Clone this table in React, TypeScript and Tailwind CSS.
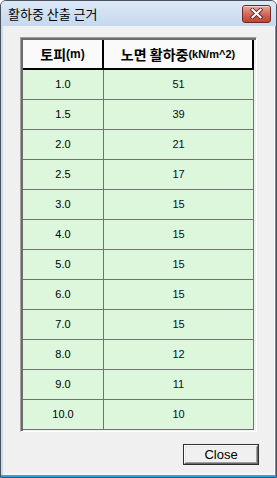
import React from "react";

const rows: [string, string][] = [
  ["1.0", "51"],
  ["1.5", "39"],
  ["2.0", "21"],
  ["2.5", "17"],
  ["3.0", "15"],
  ["4.0", "15"],
  ["5.0", "15"],
  ["6.0", "15"],
  ["7.0", "15"],
  ["8.0", "12"],
  ["9.0", "11"],
  ["10.0", "10"],
];

const ko = { fontFamily: '"Noto Sans CJK KR", "Noto Sans", sans-serif' };
const ar = { fontFamily: '"Liberation Sans", Arial, sans-serif' };

function TitleClose() {
  return (
    <div className="w-[29px] h-[18px] rounded-[3px] border border-[#6e2a22] bg-gradient-to-b from-[#eaa898] via-[#d4685a] to-[#c0432f] flex items-center justify-center shadow-[inset_0_1px_0_rgba(255,255,255,0.5)]">
      <svg width="13" height="11" viewBox="0 0 13 11">
        <path d="M2.5 1.8 L10.5 9.2 M10.5 1.8 L2.5 9.2" stroke="#4a1e1a" strokeWidth="3.8" strokeLinecap="square" />
        <path d="M2.5 1.8 L10.5 9.2 M10.5 1.8 L2.5 9.2" stroke="#ffffff" strokeWidth="2.2" strokeLinecap="square" />
      </svg>
    </div>
  );
}

export default function App() {
  return (
    <div className="w-[277px] h-[478px] bg-white">
      <div className="w-full h-full flex flex-col border border-[#47525e] rounded-t-[6px] overflow-hidden bg-[#c9dbef]">
        {/* Title bar */}
        <div className="h-[25px] shrink-0 flex items-center pl-[7px] pr-[5px] bg-gradient-to-b from-[#dde9f6] to-[#c5d8ed]">
          <span className="text-[13px] text-black leading-none" style={ko}>
            활하중 산출 근거
          </span>
          <div className="ml-auto">
            <TitleClose />
          </div>
        </div>
        {/* Body frame */}
        <div className="flex-1 flex flex-col pl-[2px] border-r border-b-2 border-[#2ba3dd] bg-[#c9dbef]">
          <div className="flex-1 flex flex-col bg-[#f0f0f0] border-r border-b border-[#f7f9fc] pt-[11px] px-[17px]">
            {/* Panel */}
            <div className="h-[395px] border-t border-l border-[#a0a0a0] border-r border-b border-r-white border-b-white">
              <div className="h-full border-t-2 border-l-2 border-[#6b6b6b] bg-[#f0f0f0]">
                <div className="grid grid-cols-[81px_150px]">
                  <div className="h-[30px] bg-[#fafafa] border-r-2 border-b-2 border-black flex items-center justify-center text-black font-bold">
                    <span className="text-[14px] leading-none" style={ko}>토피</span>
                    <span className="text-[12px] leading-none" style={ar}>(m)</span>
                  </div>
                  <div className="h-[30px] bg-[#fafafa] border-r-2 border-b-2 border-black flex items-center justify-center text-black font-bold">
                    <span className="text-[14px] leading-none" style={ko}>노면 활하중</span>
                    <span className="text-[11px] leading-none" style={ar}>(kN/m^2)</span>
                  </div>
                  {rows.map(([a, b]) => (
                    <React.Fragment key={a}>
                      <div className="h-[30px] bg-[#dcf7dc] border-r border-b border-[#727272] flex items-center justify-center text-[11px] text-black" style={ar}>
                        {a}
                      </div>
                      <div className="h-[30px] bg-[#dcf7dc] border-r border-b border-[#727272] flex items-center justify-center text-[11px] text-[#10082a]" style={ar}>
                        {b}
                      </div>
                    </React.Fragment>
                  ))}
                </div>
              </div>
            </div>
            {/* Button row */}
            <div className="flex justify-end pt-[12px] -mr-[2px]">
              <div className="w-[76px] h-[21px] border border-[#2e2e2e]">
                <div className="w-full h-full border-t border-l border-white border-r border-b border-r-[#696969] border-b-[#696969]">
                  <div className="w-full h-full border-t border-l border-[#e3e3e3] border-r border-b border-r-[#a0a0a0] border-b-[#a0a0a0] bg-[#f0f0f0] flex items-center justify-center">
                    <span className="text-[13px] leading-none text-black" style={ar}>Close</span>
                  </div>
                </div>
              </div>
            </div>
          </div>
        </div>
      </div>
    </div>
  );
}
